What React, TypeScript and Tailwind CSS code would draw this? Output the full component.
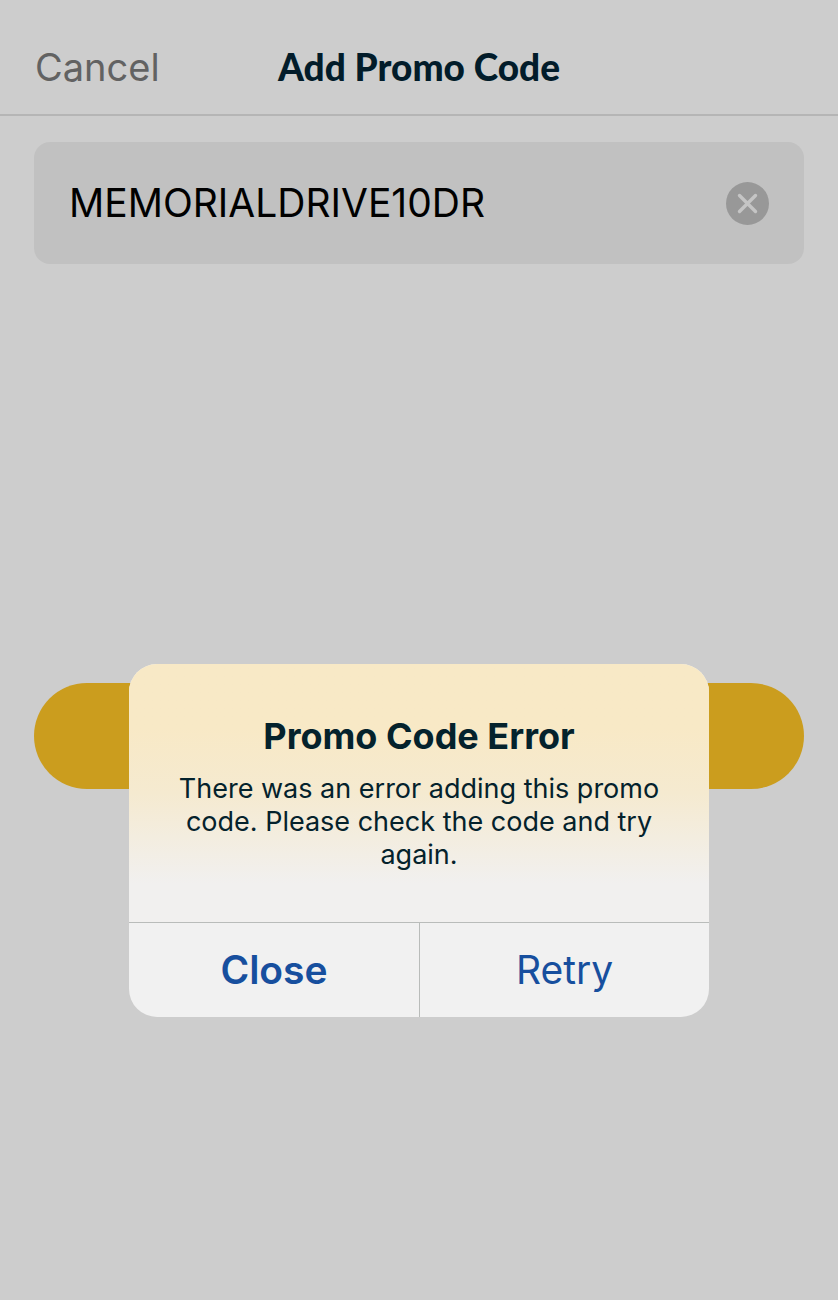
import { useState } from 'react';

export default function App() {
  const [code, setCode] = useState('MEMORIALDRIVE10DR');
  const [showError, setShowError] = useState(true);

  return (
    <div className="min-h-screen bg-[#cdcdcd] font-['Inter','Liberation_Sans',sans-serif]">
      <header className="grid grid-cols-[1fr_auto_1fr] items-center h-[116px] px-[35px] pt-5 border-b-2 border-[#b5b5b5]">
        <button type="button" className="justify-self-start text-[38px] leading-[48px] text-[#626262]">
          Cancel
        </button>
        <h1 className="text-[37px] leading-[48px] font-black text-[#021c2a] font-['Lato',sans-serif]">
          Add Promo Code
        </h1>
      </header>

      <main className="px-[34px] pt-[26px]">
        <div className="flex items-center h-[122px] rounded-2xl bg-[#c1c1c1] px-[35px]">
          <input
            type="text"
            aria-label="Promo code"
            value={code}
            onChange={(e) => setCode(e.target.value)}
            className="min-w-0 flex-1 bg-transparent text-[39px] leading-[48px] text-black outline-none"
          />
          <button type="button" aria-label="Clear promo code" onClick={() => setCode('')}>
            <svg className="w-[43px] h-[43px]" viewBox="0 0 43 43" fill="none">
              <circle cx="21.5" cy="21.5" r="21.5" fill="#989898" />
              <path d="M13.5 13.5l16 16M29.5 13.5l-16 16" stroke="#c5c5c5" strokeWidth="3.4" strokeLinecap="round" />
            </svg>
          </button>
        </div>

        <button
          type="button"
          aria-label="Apply promo code"
          onClick={() => setShowError(true)}
          className="block w-full h-[106px] mt-[419px] rounded-full bg-[#cb9d1e]"
        />
      </main>

      {/* Error alert */}
      {showError && (
        <div className="absolute inset-x-0 top-0 flex justify-center px-6 pt-[664px]">
          <div
            role="alertdialog"
            aria-labelledby="error-title"
            aria-describedby="error-text"
            className="w-full max-w-[580px] overflow-hidden rounded-[28px] text-center bg-[#f1f1f1]"
          >
            <div className="px-10 pt-12 pb-[51px] bg-linear-to-b from-[#f8e9c6] from-25% via-[#f5ead0] via-50% to-[#f1f0ef] to-85%">
              <h2 id="error-title" className="text-[36px] leading-[48px] font-bold text-[#04222c]">
                Promo Code Error
              </h2>
              <p id="error-text" className="mt-3 text-[27px] leading-[33px] text-[#04222c]">
                There was an error adding this promo code. Please check the code and try again.
              </p>
            </div>
            <div className="grid grid-cols-2 border-t border-[#b9bcba] text-[39px] leading-[48px] text-[#174f9e]">
              <button type="button" onClick={() => setShowError(false)} className="h-[94px] font-semibold">
                Close
              </button>
              <button type="button" className="h-[94px] border-l border-[#b9bcba]">
                Retry
              </button>
            </div>
          </div>
        </div>
      )}
    </div>
  );
}
